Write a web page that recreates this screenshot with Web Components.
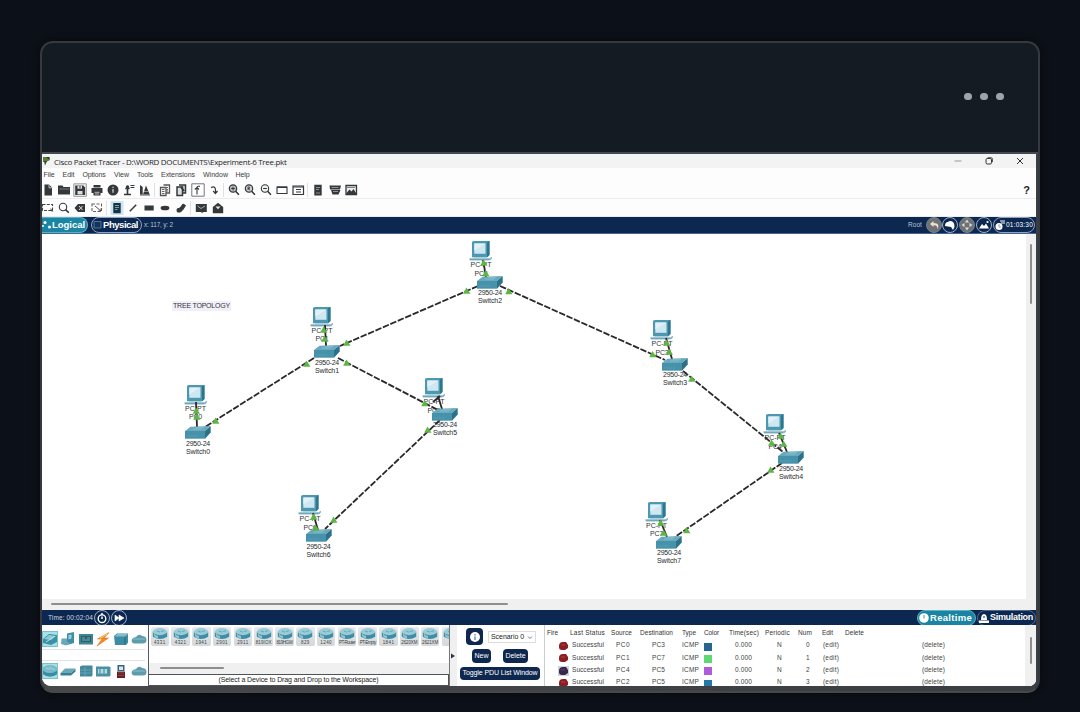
<!DOCTYPE html>
<html lang="en"><head><meta charset="utf-8"><title>Cisco Packet Tracer</title>
<style>html,body{margin:0;width:1080px;height:712px;overflow:hidden;background:#0c1018;font-family:"Liberation Sans",Arial,sans-serif}</style>
</head><body><pt-card><pt-window></pt-window></pt-card>
<script>
const define=(name,css,html,after)=>customElements.define(name,class extends HTMLElement{
  constructor(){super();this.attachShadow({mode:'open'})}
  connectedCallback(){
    this.shadowRoot.innerHTML=`<style>*{box-sizing:border-box}${css}</style>${typeof html==='function'?html(this):html}`;
    if(after)after(this);
  }
});

/* Label whose letter spacing is tuned so that the text spans w pixels */
define('fit-label',`:host{display:inline-block;white-space:nowrap;line-height:1.15;flex:none}span{display:inline-block}`,`<span><slot></slot></span>`,el=>{
  const w=parseFloat(el.getAttribute('w'));if(!w)return;
  const s=el.shadowRoot.querySelector('span');
  const d=(w-s.getBoundingClientRect().width)/el.textContent.length;
  s.style.letterSpacing=d+'px';el.style.width=w+'px';
});

const D='#33383b';
const icons={
 file:`<path d="M3.500 1.500h4.500l3 3V12.500H3.500z" fill="${D}"/><path d="M8 1.800v3h3" stroke="#fff" stroke-width=".7" fill="none"/>`,
 folder:`<path d="M1 2.500h4.500l1 1.400h6.500V11.500H1z" fill="${D}"/><path d="M2.500 6h10" stroke="#999" stroke-width=".7"/>`,
 save:`<path d="M.8 .8h12.600v12.600H.8z" fill="#eee" stroke="#888" stroke-width=".8"/><path d="M2.200 2.500h8l1.900 1.900v7.500H2.200z" fill="${D}"/><path d="M4.500 2.800h4.500v3H4.500zM4.500 8h5v3.600h-5z" fill="#ddd"/><path d="M7 3v2.500" stroke="${D}"/>`,
 print:`<path d="M3.500 2h7v2.500h-7zM1.500 5h11v5h-11zM3.500 9h7v3.500h-7z" fill="${D}"/><path d="M4.500 9.300h5M5 11h4" stroke="#ddd" stroke-width=".8"/>`,
 info:`<circle cx="7" cy="7" r="5.500" fill="${D}"/><path d="M7 6v3.800M7 3.800v1.300" stroke="#ddd" stroke-width="1.200"/>`,
 user:`<path d="M2 11.500h7M5.500 11V5M3.300 5.500h4.400" stroke="${D}" stroke-width="1.700"/><circle cx="5.500" cy="4" r="1.700" fill="${D}"/><path d="M8.500 2.500h4M8.500 4.500h4" stroke="${D}"/>`,
 wizard:`<path d="M2 2v9.500h2.700V4zM5 11.500L8 2.500l3.700 9z" fill="${D}"/><path d="M6 8.500h4" stroke="#999"/><path d="M2 12h10" stroke="#555"/>`,
 copy:`<path d="M2.500 4.500H8v8H2.500zM5.500 2h6V10H8" fill="none" stroke="#555" stroke-width="1.300"/><path d="M4 6.500h2.500M4 8.500h2.500M4 10.500h2.500M7.500 4.500h2.500M8 6.500h2M8 8h2" stroke="#666"/>`,
 paste:`<path d="M3 4h5.500v8.500H3zM5 2h6.500V10H9" fill="#ddd" stroke="${D}" stroke-width="1.500"/><path d="M7 4l3 4" stroke="${D}" stroke-width="1.800"/>`,
 undo:`<path d="M.8 .8h12.400v12.400H.8z" fill="#fff" stroke="#667" stroke-width=".9"/><path d="M6 11.500V5q0-1.700 1.500-1.700H9M3.800 6.500L6 4.500l2 2" fill="none" stroke="${D}" stroke-width="1.100"/>`,
 redo:`<path d="M4 4.500q4-2 4.500 2V10M6.200 8l2.200 2.500L10.500 8" fill="none" stroke="${D}" stroke-width="1.200"/>`,
 zin:`<circle cx="6" cy="5.500" r="3.700" fill="#bbb" stroke="${D}" stroke-width="1.200"/><path d="M8.700 8.200l3.200 3.500" stroke="${D}" stroke-width="1.600"/><path d="M4.200 5.500h3.600M6 3.700v3.600" stroke="${D}"/>`,
 zr:`<circle cx="6" cy="5.500" r="3.700" fill="#ccc" stroke="${D}" stroke-width="1.200"/><path d="M8.700 8.200l3.200 3.500" stroke="${D}" stroke-width="1.600"/><path d="M5 7V4h1.500v1.500H5l2 1.700" fill="none" stroke="${D}" stroke-width=".8"/>`,
 zout:`<circle cx="6" cy="5.500" r="3.700" fill="#eee" stroke="${D}" stroke-width="1.100"/><path d="M8.700 8.200l3.200 3.500" stroke="${D}" stroke-width="1.600"/><path d="M4.200 5.500h3.600" stroke="${D}"/>`,
 rectwin:`<path d="M2 4h10v6.500H2z" fill="#fff" stroke="${D}" stroke-width="1.100"/><path d="M2 4.300h10" stroke="${D}" stroke-width="1.400"/>`,
 listwin:`<path d="M2 3h10.500v8.500H2z" fill="#fff" stroke="${D}" stroke-width="1.200"/><path d="M2 4h10M5 6.500h5M5 9h5" stroke="${D}" stroke-width="1.200"/>`,
 book:`<path d="M3.300 1.800h7.400v10.700H3.300z" fill="${D}"/><path d="M5 4.500h4M5 6.500h3M5 10h4" stroke="#aaa" stroke-width=".8"/>`,
 tray:`<path d="M1.500 2.500h11.500l-1 4H2zM3 7h9.500l-2 4.500H4.500z" fill="${D}"/><path d="M3.500 4.500h7M5 8.500h5" stroke="#aaa" stroke-width=".8"/>`,
 pic:`<path d="M2 2.500h10.500v9H2z" fill="#eee" stroke="${D}" stroke-width="1.300"/><path d="M2.500 10l3-3.500 2 2L9.500 6l2.500 4v1H2.500z" fill="${D}"/><path d="M3 4.500h8" stroke="#666" stroke-width=".8"/>`,
 select:`<path d="M1.500 3.500h10v6h-10z" fill="none" stroke="#444" stroke-width="1.100" stroke-dasharray="3 1.300"/><path d="M9 7l3.500 3.200-2 .2z" fill="${D}"/>`,
 mag:`<circle cx="6" cy="6" r="3.700" fill="none" stroke="${D}" stroke-width="1.100"/><path d="M8.600 8.600l3.200 3.200" stroke="${D}" stroke-width="1.600"/>`,
 del:`<path d="M1.500 7l3.500-4h7v8H5z" fill="${D}"/><path d="M6 5l3.500 4M9.500 5L6 9" stroke="#ddd"/>`,
 resize:`<path d="M2 3h9.500v7.500H2z" fill="none" stroke="#666" stroke-width="1.100" stroke-dasharray="3 1.500"/><path d="M5 5l6 5M11 7.500V10H8.500" stroke="#555" fill="none"/>`,
 note:`<path d="M.5 0h13v14H.5z" fill="#c9e5f5"/><path d="M3.300 2h7.400v10.200H3.300z" fill="#173244"/><path d="M5 4.500h4M5 6.500h4M5 8.500h2.500" stroke="#9bb" stroke-width=".8"/>`,
 line:`<path d="M3.800 10.200l6.400-6.400" stroke="${D}" stroke-width="1.500"/>`,
 rect:`<path d="M2.500 4.500h9.200v5H2.500z" fill="${D}"/>`,
 oval:`<ellipse cx="7" cy="7" rx="4.400" ry="2.300" fill="${D}"/>`,
 shape:`<path d="M3 8l3-1 3-4 2.500 1.500L9 8.500 6.500 11 3.300 11z" fill="${D}" stroke="${D}" stroke-linejoin="round"/>`,
 mail:`<path d="M1.800 3h11v8H9.500l-2 1.300V11H1.800z" fill="${D}"/><path d="M3.500 5l3.500 2.500L11 5" stroke="#aaa" fill="none"/>`,
 open:`<path d="M1.800 6L7 1.800 12.200 6v6.200H1.800z" fill="${D}"/><path d="M4.500 5.500h5L7 8.300z" fill="#eee"/>`
};
define('tool-icon',`:host{display:block;width:14px;height:14px;flex:none}svg{display:block;overflow:visible}`,el=>`<svg width="14" height="14" viewBox="0 0 14 14">${icons[el.getAttribute('name')]}</svg>`);

define('tool-bar',`:host{display:flex;align-items:center;box-sizing:border-box;padding:0 9px 0 0;background:#fdfdfe;border-bottom:1px solid #ececec}
.g{display:flex;gap:2.2px;margin-left:-1px}.g+.g{margin-left:2px;padding-left:3px;border-left:1px solid #e1e1e1}::slotted(*){margin-left:auto}`,
 el=>el.getAttribute('groups').split('|').map(g=>`<div class="g">${g.split(' ').map(n=>`<tool-icon name="${n}"></tool-icon>`).join('')}</div>`).join('')+'<slot></slot>');

define('pt-titlebar',`:host{display:flex;align-items:center;height:14px;background:#f3f3f4;color:#26272b;font:8px "Open Sans","Noto Sans",sans-serif}
.logo{margin:0 4px 0 0}.ctl{margin-left:auto;display:flex;gap:21px;margin-right:11px}svg{display:block}fit-label{margin-top:1px}`,
 `<svg class="logo" width="8" height="12"><path d="M1 2h6l1 3-4 2H1z" fill="#5b7d35"/><path d="M2 6l1 4.500 2-4.500z" fill="#3b3f32"/><path d="M4 2h3.500v2.500z" fill="#233"/></svg>
 <fit-label w="232.500">Cisco Packet Tracer - D:\\WORD DOCUMENTS\\Experiment-6 Tree.pkt</fit-label>
 <div class="ctl"><svg width="10" height="10"><path d="M1.500 5h7" stroke="#999"/></svg><svg width="10" height="10"><rect x="2" y="2.500" width="5.500" height="5.500" rx="1.300" fill="none" stroke="#333"/><path d="M3.500 1.700h3.500q1.500 0 1.500 1.500v3" fill="none" stroke="#444" stroke-width=".9"/></svg><svg width="10" height="10"><path d="M2 2l6 6M8 2L2 8" stroke="#333"/></svg></div>`);

define('pt-menubar',`:host{display:flex;align-items:center;height:14px;background:#fdfdfe;color:#3c3c3c;font-size:7px;padding:1px 0 0 1.500px;box-sizing:border-box}`,
 [['File',11,8],['Edit',12,8],['Options',23,8.500],['View',15,8],['Tools',16,8],['Extensions',34,8],['Window',25,7.500],['Help',14,0]].map(m=>`<fit-label w="${m[1]}" style="margin-right:${m[2]}px">${m[0]}</fit-label>`).join(''));

define('nav-pill',`:host{display:flex;align-items:center;box-sizing:border-box;height:16px;border-radius:8px;border:1px solid #8fa3c0;color:#fff;flex:none}:host([on]){background:#1a84a3;border-color:#5fb1c8}`,`<slot></slot>`);
define('nav-disc',`:host{display:flex;box-sizing:border-box;align-items:center;justify-content:center;width:16px;height:16px;border-radius:50%;border:1px solid #9db0c9;flex:none}:host([grey]){background:#6f7275;border-color:#77808a}`,`<slot></slot>`);
define('nav-bar',`:host{display:flex;box-sizing:border-box;align-items:center;background:#0d2850;color:#fff;overflow:hidden}`,`<slot></slot>`);

/* Devices on the workspace canvas */
define('pc-node',`:host{position:absolute;width:26px;margin-left:-13px;text-align:center;font-size:7px;color:#33363a}svg{display:block;margin:auto}.t{height:8.500px;line-height:8.500px;display:flex;justify-content:center;align-items:center}`,
 el=>`<svg width="24" height="20"><path d="M3 .8L5 0h15.500v14l-2 2.200H3z" fill="#4b98b0"/><path d="M18 1.500L20.500 0v14L18 16z" fill="#2d778e"/><path d="M5.300 2.500h11.200v10.300H5.300z" fill="#cfe7f1"/><path d="M5.300 2.500h11.200l-11.200 7z" fill="#e1f1f7"/><path d="M5 16.200h13v1H5z" fill="#a9ccd8"/><path d="M.5 17.300h20l2.500-1.500v1.500l-1.500 2H.5z" fill="#85b7c8"/><path d="M1 18.800h19" stroke="#5f97a9" stroke-width=".7"/></svg><div class="t"><fit-label w="21">PC-PT</fit-label></div><div class="t"><fit-label w="13">${el.getAttribute('name')}</fit-label></div>`);
define('switch-node',`:host{position:absolute;width:26px;text-align:center;font-size:7px;color:#282b2e}svg{display:block;margin-bottom:1px}.t{height:8px;display:flex;justify-content:center;align-items:center}`,
 el=>`<svg width="26" height="13"><path d="M0 5L5.500 .8 25.500 0 20 5z" fill="#68aabd"/><path d="M0 5h20v7.700H0z" fill="#4692aa"/><path d="M20 5l5.700-5v6.500l-5.700 6.200z" fill="#2b7188"/><path d="M8 3h9M11 1.700h8" stroke="#8fc2d0" stroke-width=".8"/><path d="M2 10h11" stroke="#5c9fb3" stroke-width=".8"/></svg><div class="t"><fit-label w="24">2950-24</fit-label></div><div class="t"><fit-label w="24">${el.getAttribute('name')}</fit-label></div>`);

const pcs=[[195.5,384.5,'PC0'],[322,306.5,'PC1'],[481,241,'PC2'],[662,320,'PC3'],[775,414,'PC4'],[434,378,'PC5'],[310,495,'PC6'],[656.5,501.5,'PC7']];
const sws=[[185,426],[314,345],[477,275.5],[662,357.5],[778,451],[432,407.5],[305.5,529],[656,535.5]];
const cables=[[478,286,340,346],[500,286,665,360],[314,358,205,427],[338,358,438,410],[440,420,325,529],[683,371,783,452],[782,463,675,537]];
const shorts=[[196,402,197,427],[325,325,326,346],[483,260,486,277],[666,338,672,359],[779,433,787,452],[438,396,442,409],[433,402,440,396],[313,513,318,530],[660,520,667,537]];
const tris=[[467,291],[347,343],[509,291.5],[653,354.5],[307,364],[216,421],[347,363],[425,403.5],[428,430],[334,520],[692,379],[772,443],[771,470],[687,530.5],
 [196.5,411],[197,417],[324,330],[325,339],[484,263],[486,273.5],[667,343],[669.5,352],[781,436],[784,444],[314,517],[316,528],[661,523],[664,533]];
define('pt-workspace',`:host{position:relative;display:block;background:#fff;overflow:hidden;flex:1}.links{position:absolute;inset:0}
.note{position:absolute;left:130px;top:67px;background:#f1f0f8;color:#33343c;font-size:7px;height:10px;display:flex;align-items:center;padding:0 1px}`,
 ()=>`<div class="note"><fit-label w="57">TREE TOPOLOGY</fit-label></div>`+
 pcs.map(p=>`<pc-node name="${p[2]}" style="left:${p[0]-42}px;top:${p[1]-234}px"></pc-node>`).join('')+
 `<svg class="links" width="984" height="365" viewBox="42 234 984 365"><g stroke="#2b2829" fill="none" stroke-width="1.800">${cables.map(c=>`<path stroke-dasharray="6.500 1.600" d="M${c[0]} ${c[1]}L${c[2]} ${c[3]}"/>`).join('')}${shorts.map(c=>`<path d="M${c[0]} ${c[1]}L${c[2]} ${c[3]}"/>`).join('')}</g></svg>`+
 sws.map((s,i)=>`<switch-node name="Switch${i}" style="left:${s[0]-42}px;top:${s[1]-234}px"></switch-node>`).join('')+
 `<svg class="links" width="984" height="365" viewBox="42 234 984 365">${tris.map(t=>`<path d="M${t[0]-.5} ${t[1]-3.5}l4 6.300h-7.300z" fill="#5db544"/>`).join('')}</svg>`);

define('scroll-strip',`:host{display:block;box-sizing:border-box;background:#f0f0f1;flex:none}div{background:#8d8e90;border-radius:1px}`,el=>`<div style="${el.getAttribute('thumb')}"></div>`);

const dev={
 router:`<path d="M.5 6v5q7.500 5.500 15 0V6z" fill="#3b8ca3"/><ellipse cx="8" cy="6" rx="7.500" ry="4" fill="#79bac9"/><path d="M4 5l3 1.500M9 5.500l4 1M8 3.500v3" stroke="#b5dce4" stroke-width=".8"/>`,
 tile:`<path d="M.8 5v5.500q7.200 5 14.400 0V5z" fill="#3c8ea6"/><ellipse cx="8" cy="5" rx="7.200" ry="3.800" fill="#9acbd6"/><path d="M2 7q2 3 4 2.500l0 3Q3 12 2 10z" fill="#cfe6ea" opacity=".6"/><path d="M5 4.500l3 1M9 5l3-1" stroke="#5a9fb1" stroke-width=".8"/>`,
 net:`<path d="M1 8l6-5 8 1v7l-6 3-8-2z" fill="#3b91a6"/><path d="M2 8l5-4 7 1-5 4z" fill="#8dcbd6"/><path d="M4 11l9-6" stroke="#b9e2e9"/>`,
 end:`<path d="M7 2.500l7-1.500v11l-7 2z" fill="#3f8ea5"/><path d="M8.500 4l3-.5v4l-3 1z" fill="#9fcfda"/><path d="M1.500 7.500h5.500v3l3 1.500-4 2.500-5-1.500z" fill="#68a8b9"/>`,
 comp:`<path d="M1 3h14v10.500H1z" fill="#3f8494"/><path d="M3 5h10v6H3z" fill="#27616f"/><path d="M4 7h3M9 7h3M4 9h8" stroke="#92c3ca" stroke-width=".8"/>`,
 bolt:`<path d="M14 1.500L2.500 8H7l-5 7 11.500-8H9z" fill="#f28a20" stroke="#e4611b" stroke-width=".5"/><path d="M12 3L5 7.500" stroke="#fad15a"/>`,
 misc:`<path d="M1 5l3-2.500h11v9l-2 2.500H2z" fill="#3c8da3"/><path d="M1.500 5.500l3-2.500H15l-3 2.500z" fill="#83bdca"/><path d="M12 6v7.500" stroke="#246577"/>`,
 cloud:`<path d="M3 12.500Q0 11.500 .8 8.500 2 6 5 6q3-4 6-1 4.500 0 4.500 4 0 3.500-4 3.500z" fill="#5d9cad"/><path d="M2 8h12" stroke="#8abdc9"/>`,
 flat:`<path d="M.5 10L5 5.500h10.500L11 10z" fill="#6ba7b7"/><path d="M.5 10H11l4.500-4.500V8.500L11 12.500H.5z" fill="#397f94"/>`,
 hub:`<path d="M2 3.500l2-1h10.500v10l-1 1H2z" fill="#42889c"/><path d="M2 7h11M2 10h11M7 4v9" stroke="#74aebb" stroke-width=".7"/>`,
 wifi:`<path d="M1 3.500h13.500l1 1v8l-1 1H1z" fill="#4b91a4"/><path d="M3 6h9v4.500H3z" fill="#b8dbe1"/><path d="M5 6v4.500M9 6v4.500" stroke="#397c91"/>`,
 fire:`<path d="M4.500 2h7v6h-7z" fill="#30677a"/><path d="M6 3.500h4v3.500H6z" fill="#d9e8ec"/><path d="M4 8.500h8v6.500H4z" fill="#672026"/><path d="M5 10h6M5 12.500h6" stroke="#a65a55" stroke-width=".6"/>`
};
define('dev-icon',`:host{display:flex;align-items:center;justify-content:center;width:16px;height:16px;flex:none}:host([on]){background:#a9e0e6;outline:1px solid #76c3cd;outline-offset:-1px}svg{display:block}`,el=>`<svg width="16" height="16" viewBox="0 0 16 16">${dev[el.getAttribute('name')]}</svg>`);
define('dev-families',`:host{display:flex;box-sizing:border-box;flex-direction:column;width:107px;border-right:1px solid #555b62;background:#fff;flex:none}.r{display:flex;gap:1.800px;height:24px;align-items:center;padding-top:4px}.m{height:12px;border:solid #e2e3e5;border-width:1px 0;margin-right:3px}.b{padding:0;height:19px}`,
 ()=>{const r=a=>a.map((n,i)=>`<dev-icon name="${n}" ${i?'':'on'}></dev-icon>`).join('');return `<div class="r">${r(['net','end','comp','bolt','misc','cloud'])}</div><div class="m"></div><div class="r b">${r(['router','flat','hub','wifi','fire','cloud'])}</div>`});
define('model-tile',`:host{display:flex;flex-direction:column;align-items:center;width:18.500px;height:18.500px;background:linear-gradient(#e6eaec,#d4d8da);border-radius:2px;color:#3a3f43;font-size:4.500px;flex:none}svg{display:block}`,
 el=>`<svg width="16" height="12.500" viewBox="0 0 16 13.500" preserveAspectRatio="none">${dev.tile}</svg>`+(el.getAttribute('name')?`<fit-label w="${el.getAttribute('w')}">${el.getAttribute('name')}</fit-label>`:''));
define('model-list',`:host{display:flex;flex-direction:column;width:300px;flex:none;background:#fff}.r{display:flex;gap:2.300px;padding:2px 0 0 1.500px;height:38px;overflow:hidden;align-items:flex-start}.msg{height:12px;border:1px solid #4f5357;border-left:0;display:flex;align-items:center;justify-content:center;font-size:7px;color:#222}`,
 ()=>`<div class="r">${['4331','4321','1941','2901','2911','819IOX','819HGW','829','1240','PT-Router','PT-Empty','1841','2620XM','2621XM',''].map(n=>`<model-tile name="${n}" w="${n.length>4?16:n.length*2.9}"></model-tile>`).join('')}</div><scroll-strip style="height:11px;padding:4px 0 0 11px" thumb="width:64px;height:1.8px"></scroll-strip><div class="msg"><fit-label w="160">(Select a Device to Drag and Drop to the Workspace)</fit-label></div>`);
define('pt-button',`:host{display:flex;align-items:center;justify-content:center;background:#0e274e;color:#fff;border-radius:4px;height:13.500px;font-size:7px;flex:none}`,`<slot></slot>`);
define('scenario-panel',`:host{display:flex;box-sizing:border-box;width:96px;border-right:1px solid #ccc;flex:none}.a{width:8px;background:#f0f0f1;border-left:1px solid #777;display:flex;align-items:center;margin-right:3px}.c{flex:1;display:flex;flex-direction:column;padding-top:3px}.r{display:flex}.s{display:flex;align-items:center;justify-content:space-between;border:1px solid #ddd;width:48px;height:12px;font-size:7px;color:#222;padding:0 2px;margin:3px 0 0 5px}`,
 `<div class="a"><svg width="6" height="8"><path d="M1 1.500L5 4 1 6.500z" fill="#333"/></svg></div><div class="c"><div class="r"><pt-button style="width:17px;height:17px;margin-left:6px"><svg width="12" height="12"><circle cx="6" cy="6" r="5" fill="#fff"/><path d="M6 5.500V9M6 3v1.500" stroke="#2c5687"/></svg></pt-button><div class="s"><fit-label w="33">Scenario 0</fit-label><svg width="6" height="5"><path d="M1 1.500l2 2 2-2" fill="none" stroke="#555" stroke-width=".8"/></svg></div></div>
 <div class="r" style="padding:4px 0 0 12px;gap:12px"><pt-button style="width:19px"><fit-label w="14">New</fit-label></pt-button><pt-button style="width:25px"><fit-label w="20">Delete</fit-label></pt-button></div>
 <pt-button style="width:80px;margin-top:4px"><fit-label w="75">Toggle PDU List Window</fit-label></pt-button></div>`);

define('pdu-row',`:host{display:grid;box-sizing:border-box;grid-template-columns:23px 41px 29px 42px 22px 25px 36px 33px 24px 23px 1fr;align-items:center;height:12.300px;font-size:6.500px;color:#3d3f42;padding-left:2px;flex:none}:host([head]){height:13px;padding-top:1px;color:#333}.c{display:flex}i{display:block;width:8px;height:8px}`,
 el=>{const v=el.getAttribute('v').split(',');
  if(el.hasAttribute('head')){const w=[11,35,21,33,14,15,30,25,14,11,19];return v.map((t,i)=>`<div class="c"><fit-label w="${w[i]}">${t}</fit-label></div>`).join('')}
  const c=(t,w,p)=>`<div class="c" style="padding-left:${p}px"><fit-label w="${w}">${t}</fit-label></div>`;
  return `<div class="c" style="padding:2px 0 0 10.5px"><svg width="11" height="10" ${v[4]==='2'?'style="background:#ccd5df"':''}><path d="M1 5q0-4 4-4h3l2 3v3L7 9H4Q1 9 1 6z" fill="${v[4]==='2'?'#38264c':'#8c1d22'}"/><path d="M3 4h4" stroke="${v[4]==='2'?'#5c4068':'#b04540'}"/></svg></div>`+c('Successful',32,2)+c(v[0],14,5)+c(v[1],13,12)+c('ICMP',17,0)+`<div class="c" style="padding-top:3px"><i style="background:${v[2]}"></i></div>`+c('0.000',17,6)+c('N',5,12)+c(v[3],4,8)+c('(edit)',16,1)+c('(delete)',23,77)});
define('pdu-table',`:host{display:flex;flex:1;background:#fff;overflow:hidden}.t{flex:1;padding-top:1px;overflow:hidden}`,
 `<div class="t"><pdu-row head v="Fire,Last Status,Source,Destination,Type,Color,Time(sec),Periodic,Num,Edit,Delete"></pdu-row><pdu-row v="PC0,PC3,#246690,0,0"></pdu-row><pdu-row v="PC1,PC7,#5ed873,1,1"></pdu-row><pdu-row v="PC4,PC5,#b05bdc,2,2"></pdu-row><pdu-row v="PC2,PC5,#2677a5,3,3"></pdu-row></div><scroll-strip style="width:11px;padding:12px 0 0 5px" thumb="width:1.5px;height:27px"></scroll-strip>`);

define('pt-window',`:host{display:flex;flex-direction:column;width:994px;height:532px;background:#fff;border-radius:0 0 7px 9px;overflow:hidden}
.ws{display:flex;height:365px}.low{display:flex;height:61px}nav-bar{flex:none;font-size:6.500px}svg{display:block;flex:none}`,
`<pt-titlebar></pt-titlebar><pt-menubar></pt-menubar>
<tool-bar style="height:17px" groups="file folder save print info user wizard|copy paste undo redo|zin zr zout rectwin listwin|book tray pic"><b style="font-size:11px;color:#222;margin-right:-3px">?</b></tool-bar>
<tool-bar style="height:18px" groups="select mag del resize|note line rect oval shape|mail open"></tool-bar>
<nav-bar style="height:17px;border-bottom:1px solid #42648f"><nav-pill on style="width:47px;margin-left:-1px;border-left:0;border-radius:0 8px 8px 0"><svg width="11" height="12"><circle cx="4" cy="3.500" r="1.500" fill="#fff"/><circle cx="2" cy="7" r="1" fill="#fff"/><circle cx="8.500" cy="8" r="1.500" fill="#fff"/></svg><b style="font-size:9.500px"><fit-label w="33">Logical</fit-label></b></nav-pill>
<nav-pill style="width:51px;margin-left:3px"><svg width="11" height="10"><path d="M2 1.500h7v6.500H2z" fill="#11355e" stroke="#54718e"/></svg><b style="font-size:9.500px"><fit-label w="35">Physical</fit-label></b></nav-pill><fit-label w="29" style="margin-left:2px;color:#b8c2d2">x: 117, y: 2</fit-label>
<span style="margin-left:auto;color:#b8c2d2;display:flex"><fit-label w="14">Root</fit-label></span>
<nav-disc grey style="margin-left:4px"><svg width="11" height="11"><path d="M4.500 1L1 4l3.500 3V5.200q4-.5 4 3.800 3-6-4-6z" fill="#e9e1d6"/></svg></nav-disc>
<nav-disc><svg width="12" height="12"><path d="M1 7q0-4 3-4 2-2 5 0 2 2 1.500 5l-1.500 3-2-3z" fill="#fff"/></svg></nav-disc>
<nav-disc grey style="margin-left:1px"><svg width="12" height="12"><path d="M6 .5l2 3H4zM6 11.500L4 8.500h4zM.5 6l3-2v4zM11.500 6L8.500 8V4z" fill="#ddd"/></svg></nav-disc>
<nav-disc style="margin-left:1px"><svg width="12" height="12"><path d="M1 9.500L4 5l2 2 2-2.500 3 5z" fill="#fff"/><circle cx="9.500" cy="3" r="1.100" fill="#fff"/></svg></nav-disc>
<nav-pill style="width:42px;margin:0 1px 0 1px"><svg width="12" height="12"><circle cx="5" cy="7.500" r="3.500" fill="#fff"/><path d="M5 5v3h2" stroke="#6c7e98" fill="none" stroke-width=".7"/><path d="M6 2h5M7 4h4" stroke="#fff"/></svg><fit-label w="27">01:03:30</fit-label></nav-pill></nav-bar>
<div class="ws"><pt-workspace></pt-workspace><scroll-strip style="width:10px;padding:10px 0 0 4px" thumb="width:1.5px;height:60px"></scroll-strip></div>
<scroll-strip style="height:11px;padding:4px 0 0 9px" thumb="width:457px;height:1.8px"></scroll-strip>
<nav-bar style="height:15px"><fit-label w="45" style="margin:0 0 0 6px;color:#ccd5e2">Time: 00:02:04</fit-label><nav-disc style="margin-left:1px"><svg width="12" height="12"><circle cx="6" cy="6.700" r="3.800" fill="none" stroke="#fff" stroke-width="1.400"/><path d="M6 1v2M6 4.500V7" stroke="#fff" stroke-width="1.500"/></svg></nav-disc><nav-disc style="margin-left:1px"><svg width="12" height="10"><path d="M2 2l4 3V2l5 3-5 3V5L2 8z" fill="#fff" stroke="#fff" stroke-width=".6"/></svg></nav-disc>
<nav-pill on style="width:59px;margin-left:auto"><svg width="12" height="12"><circle cx="6" cy="6" r="4.800" fill="#fff"/><path d="M6 3v3.500" stroke="#4b91a6"/></svg><b style="font-size:9.500px"><fit-label w="42">Realtime</fit-label></b></nav-pill><nav-pill style="width:59px;margin-left:1px;border-color:#50698b"><svg width="12" height="12"><path d="M3 8q0-6 3-6t3 6zM1 8.500h10V11H1z" fill="#fff"/><path d="M5 5h2" stroke="#0d2850"/></svg><b style="font-size:9px"><fit-label w="43">Simulation</fit-label></b></nav-pill></nav-bar>
<div class="low"><dev-families></dev-families><model-list></model-list><scenario-panel></scenario-panel><pdu-table></pdu-table></div>`);

define('pt-card',`:host{display:flex;box-sizing:border-box;flex-direction:column;width:1000px;height:652px;margin:41px 0 0 40px;border:2px solid #343a40;border-bottom-color:#46484a;border-radius:13px;background:#46484a;overflow:hidden;box-shadow:0 0 7px #0a0a0c}
header{height:109px;flex:none;background:#141b22;display:flex;justify-content:flex-end;gap:8.500px;padding:49.500px 34.500px 0 0}i{width:7.500px;height:7.500px;border-radius:50%;background:#a0a4a9}
main{flex:1;border-top:2px solid #46494d;background:linear-gradient(90deg,#46484a,#3a3d41)}`,`<header><i></i><i></i><i></i></header><main><slot></slot></main>`);
</script></body></html>
